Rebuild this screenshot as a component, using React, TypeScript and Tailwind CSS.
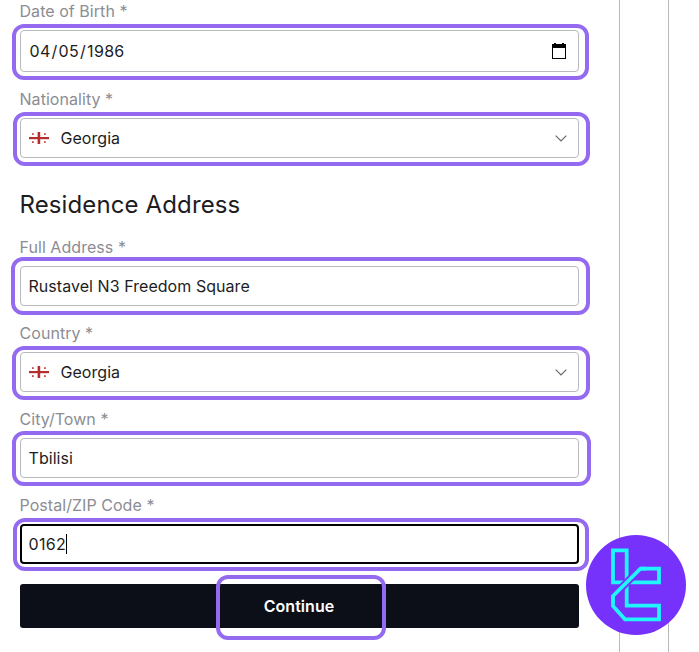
import React from "react";

function Ring({ className }: { className: string }) {
  return <span className={"pointer-events-none absolute z-10 border-4 border-[#946bf0] " + className} />;
}

function Label({ children }: { children: React.ReactNode }) {
  return <div className="-ml-[0.5px] mb-1.5 h-6 text-base leading-[22px] text-[#8b8d93]">{children}</div>;
}

function Field({ label, ring, box, children }: { label: string; ring: string; box: string; children: React.ReactNode }) {
  return (
    <div>
      <Label>{label}</Label>
      <div className="relative">
        <div className={"flex items-center rounded-[4px] text-base text-[#1d1d1f] " + box}>{children}</div>
        <Ring className={ring} />
      </div>
    </div>
  );
}

function Flag() {
  return (
    <svg className="mr-[11.5px] h-[14px] w-5 shrink-0" viewBox="0 0 20 14" fill="#b5302c">
      <rect x="0" y="6" width="20" height="2.2" />
      <rect x="8.6" y="1" width="2.6" height="12" />
      <g fill="#c4514d">
        <rect x="3" y="2.2" width="1.8" height="1.8" />
        <rect x="15" y="2.2" width="1.8" height="1.8" />
        <rect x="3" y="10.2" width="1.8" height="1.8" />
        <rect x="15" y="10.2" width="1.8" height="1.8" />
      </g>
    </svg>
  );
}

function Country() {
  return (
    <>
      <Flag />
      <span className="grow">Georgia</span>
      <svg className="mr-[3px] h-[7px] w-3" viewBox="0 0 12 7" fill="none" stroke="#66686c" strokeWidth="1.2">
        <path d="M0.7 0.7 6 6 11.3 0.7" />
      </svg>
    </>
  );
}

function Logo() {
  return (
    <svg className="absolute left-[586px] top-[535px] z-20 h-[100px] w-[100px]" viewBox="0 0 100 100">
      <circle cx="50" cy="50" r="50" fill="#7631fb" />
      <g fill="none" stroke="#1ff5fb" strokeWidth="3.8">
        <path d="M27 15.3H40.7V47.3H27Z" />
        <path d="M54.5 33.7H73V47.3H40.7V70.7H73V84.3H39L27 71V61" />
        <path d="M51 37.2 30 58.2" stroke="#7631fb" strokeWidth="7.5" />
        <path d="M60 33.7H54.5L27 61V68" />
      </g>
    </svg>
  );
}

export default function App() {
  return (
    <div className="relative flex h-[652px] w-[699px] overflow-hidden bg-white font-['Inter','Liberation_Sans',sans-serif] tracking-[0.05px]">
      <main className="ml-5 flex w-[559px] shrink-0 flex-col gap-4">
        <Field label="Date of Birth *" box="h-[42px] border border-[#b9babf] pl-[7.5px] pr-3" ring="-left-2 -right-[10px] -top-1.5 -bottom-2 rounded-[12px]">
          <span className="flex grow tracking-[0.3px]">
            <span className="px-px">04</span>
            <span>/</span>
            <span className="px-px">05</span>
            <span>/</span>
            <span className="px-px">1986</span>
          </span>
          <svg className="h-4 w-[14px]" viewBox="0 0 14 16" fill="#000" shapeRendering="crispEdges">
            <path fillRule="evenodd" d="M0 1H2V0H4V1H10V0H12V1H14V16H0ZM1 5V15H13V5Z" />
          </svg>
        </Field>
        <Field label="Nationality *" box="h-10 border border-[#b9babf] px-2" ring="-left-[7px] -right-[11px] -top-1.5 -bottom-2 rounded-[12px]">
          <Country />
        </Field>
        <h2 className="-mb-px -ml-[0.5px] mt-[15px] h-8 text-2xl leading-8 tracking-[0.12px] text-[#1d1d1f]">Residence Address</h2>
        <Field label="Full Address *" box="h-10 border border-[#b9babf] px-[7.5px]" ring="-left-[9px] -right-[11px] -top-[9px] -bottom-[9px] rounded-[12px]">
          Rustavel N3 Freedom Square
        </Field>
        <Field label="Country *" box="h-10 border border-[#b9babf] px-2" ring="-left-2 -right-[11px] -top-1.5 -bottom-2 rounded-[12px]">
          <Country />
        </Field>
        <Field label="City/Town *" box="h-10 border border-[#b9babf] px-[7.5px]" ring="-left-2 -right-3 -top-[7px] -bottom-2 rounded-[12px]">
          Tbilisi
        </Field>
        <Field label="Postal/ZIP Code *" box="h-10 border-2 border-black px-[6.5px]" ring="-left-[7px] -right-[10px] -top-1.5 -bottom-[7px] rounded-[12px]">
          <span className="tracking-[0.3px]">0162</span>
          <span className="h-5 w-px bg-black" />
        </Field>
        <div className="relative mt-1">
          <button className="h-11 w-full rounded-[3px] bg-[#0d0f18] pr-px text-base font-semibold text-white">Continue</button>
          <Ring className="-bottom-3 -top-[9px] left-[196px] w-[170px] rounded-[12px]" />
        </div>
      </main>
      <aside className="ml-10 w-[50px] shrink-0 border-x border-[#b9babc]" />
      <Logo />
    </div>
  );
}
